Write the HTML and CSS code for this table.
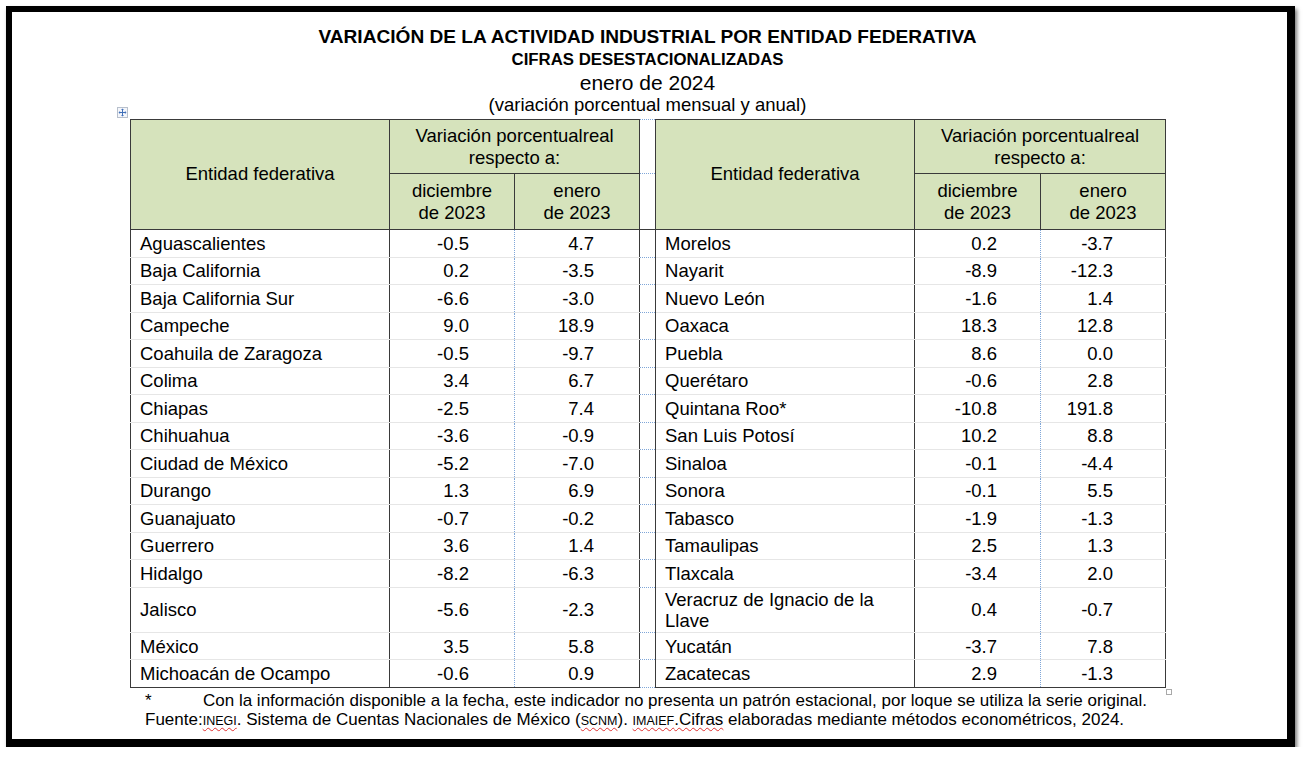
FILE: index.html
```html
<!DOCTYPE html>
<html lang="es">
<head>
<meta charset="utf-8">
<title>Variación de la actividad industrial por entidad federativa</title>
<link rel="stylesheet" href="styles.css">
</head>
<body>
<div class="frame">
  <div class="content">
    <div class="title">VARIACIÓN DE LA ACTIVIDAD INDUSTRIAL POR ENTIDAD FEDERATIVA</div>
    <div class="sub">CIFRAS DESESTACIONALIZADAS</div>
    <div class="date">enero de 2024</div>
    <div class="unit">(variación porcentual mensual y anual)</div>
    <div class="table-wrap">
      <svg class="move-handle" width="11" height="11" viewBox="0 0 11 11">
        <rect x="0.5" y="0.5" width="10" height="10" fill="#f4f6fb" stroke="#b8c0cc"/>
        <path d="M5.5 2v7M2 5.5h7" stroke="#3f6fb8" stroke-width="1"/>
        <path d="M5.5 1.5l-1.5 1.6h3zM5.5 9.5l-1.5-1.6h3zM1.5 5.5l1.6-1.5v3zM9.5 5.5l-1.6-1.5v3z" fill="#3f6fb8"/>
      </svg>
      <table class="data">
        <colgroup>
          <col class="c-name"><col class="c-num"><col class="c-num">
          <col class="c-gap">
          <col class="c-name"><col class="c-num2"><col class="c-num">
        </colgroup>
        <thead>
          <tr class="h1">
            <th rowspan="2" class="hname">Entidad federativa</th>
            <th colspan="2">Variación porcentualreal<br>respecto a:</th>
            <td class="gap"></td>
            <th rowspan="2" class="hname">Entidad federativa</th>
            <th colspan="2">Variación porcentualreal<br>respecto a:</th>
          </tr>
          <tr class="h2">
            <th>diciembre<br>de 2023</th>
            <th>enero<br>de 2023</th>
            <td class="gap"></td>
            <th>diciembre<br>de 2023</th>
            <th>enero<br>de 2023</th>
          </tr>
        </thead>
        <tbody>
          <tr><td class="name">Aguascalientes</td><td class="n1">-0.5</td><td class="n2">4.7</td><td class="gap"></td><td class="name">Morelos</td><td class="n3">0.2</td><td class="n4">-3.7</td></tr>
          <tr><td class="name">Baja California</td><td class="n1">0.2</td><td class="n2">-3.5</td><td class="gap"></td><td class="name">Nayarit</td><td class="n3">-8.9</td><td class="n4">-12.3</td></tr>
          <tr><td class="name">Baja California Sur</td><td class="n1">-6.6</td><td class="n2">-3.0</td><td class="gap"></td><td class="name">Nuevo León</td><td class="n3">-1.6</td><td class="n4">1.4</td></tr>
          <tr><td class="name">Campeche</td><td class="n1">9.0</td><td class="n2">18.9</td><td class="gap"></td><td class="name">Oaxaca</td><td class="n3">18.3</td><td class="n4">12.8</td></tr>
          <tr><td class="name">Coahuila de Zaragoza</td><td class="n1">-0.5</td><td class="n2">-9.7</td><td class="gap"></td><td class="name">Puebla</td><td class="n3">8.6</td><td class="n4">0.0</td></tr>
          <tr><td class="name">Colima</td><td class="n1">3.4</td><td class="n2">6.7</td><td class="gap"></td><td class="name">Querétaro</td><td class="n3">-0.6</td><td class="n4">2.8</td></tr>
          <tr><td class="name">Chiapas</td><td class="n1">-2.5</td><td class="n2">7.4</td><td class="gap"></td><td class="name">Quintana Roo*</td><td class="n3">-10.8</td><td class="n4">191.8</td></tr>
          <tr><td class="name">Chihuahua</td><td class="n1">-3.6</td><td class="n2">-0.9</td><td class="gap"></td><td class="name">San Luis Potosí</td><td class="n3">10.2</td><td class="n4">8.8</td></tr>
          <tr><td class="name">Ciudad de México</td><td class="n1">-5.2</td><td class="n2">-7.0</td><td class="gap"></td><td class="name">Sinaloa</td><td class="n3">-0.1</td><td class="n4">-4.4</td></tr>
          <tr><td class="name">Durango</td><td class="n1">1.3</td><td class="n2">6.9</td><td class="gap"></td><td class="name">Sonora</td><td class="n3">-0.1</td><td class="n4">5.5</td></tr>
          <tr><td class="name">Guanajuato</td><td class="n1">-0.7</td><td class="n2">-0.2</td><td class="gap"></td><td class="name">Tabasco</td><td class="n3">-1.9</td><td class="n4">-1.3</td></tr>
          <tr><td class="name">Guerrero</td><td class="n1">3.6</td><td class="n2">1.4</td><td class="gap"></td><td class="name">Tamaulipas</td><td class="n3">2.5</td><td class="n4">1.3</td></tr>
          <tr><td class="name">Hidalgo</td><td class="n1">-8.2</td><td class="n2">-6.3</td><td class="gap"></td><td class="name">Tlaxcala</td><td class="n3">-3.4</td><td class="n4">2.0</td></tr>
          <tr><td class="name">Jalisco</td><td class="n1">-5.6</td><td class="n2">-2.3</td><td class="gap"></td><td class="name">Veracruz de Ignacio de la Llave</td><td class="n3">0.4</td><td class="n4">-0.7</td></tr>
          <tr><td class="name">México</td><td class="n1">3.5</td><td class="n2">5.8</td><td class="gap"></td><td class="name">Yucatán</td><td class="n3">-3.7</td><td class="n4">7.8</td></tr>
          <tr><td class="name">Michoacán de Ocampo</td><td class="n1">-0.6</td><td class="n2">0.9</td><td class="gap"></td><td class="name">Zacatecas</td><td class="n3">2.9</td><td class="n4">-1.3</td></tr>
        </tbody>
      </table>
      <span class="resize-handle"></span>
    </div>
    <div class="notes">
      <div class="note"><span class="star">*</span>Con la información disponible a la fecha, este indicador no presenta un patrón estacional, por loque se utiliza la serie original.</div>
      <div class="note">Fuente:<span class="sp sm">INEGI</span>. Sistema de Cuentas Nacionales de México (<span class="sp sm">SCNM</span>). <span class="sp sm">IMAIEF</span><span class="sp">.Cifras</span> elaboradas mediante métodos econométricos, 2024.</div>
    </div>
  </div>
</div>
</body>
</html>
```

FILE: styles.css
```css
html, body {
  margin: 0;
  padding: 0;
  background: #ffffff;
}

body {
  font-family: "Liberation Sans", Arial, sans-serif;
  color: #000;
}

.frame {
  box-sizing: border-box;
  margin: 6px 0 0 6px;
  width: 1289px;
  height: 741px;
  border-style: solid;
  border-color: #000;
  border-width: 6px 8px 8px 6px;
  box-shadow: 2px 3px 4px rgba(0, 0, 0, 0.55);
  background: #fff;
}

.content {
  width: 1035px;
  margin-left: 118px;
  padding-top: 14px;
}

.title {
  text-align: center;
  font-weight: bold;
  font-size: 19.1px;
  line-height: 22px;
}

.sub {
  text-align: center;
  font-weight: bold;
  font-size: 16.8px;
  line-height: 23px;
}

.date {
  text-align: center;
  font-size: 21px;
  line-height: 24px;
}

.unit {
  text-align: center;
  font-size: 18.5px;
  line-height: 20px;
  margin-bottom: 4px;
}

.table-wrap {
  position: relative;
}

.move-handle {
  position: absolute;
  left: -13px;
  top: -12px;
}

.resize-handle {
  position: absolute;
  right: -7px;
  bottom: -7px;
  width: 4px;
  height: 4px;
  border: 1px solid #a9a9a9;
  background: #fff;
}

table.data {
  border-collapse: collapse;
  width: 1035px;
  table-layout: fixed;
  font-size: 18.5px;
}

col.c-name { width: 259px; }
col.c-num { width: 125px; }
col.c-num2 { width: 126px; }
col.c-gap { width: 16px; }

table.data th {
  background: #d6e3bc;
  font-weight: normal;
  text-align: center;
  vertical-align: middle;
  border: 1px solid #3a3a3a;
  padding: 0;
  line-height: 21.5px;
}

tr.h1 { height: 54px; }
tr.h2 { height: 56px; }

table.data th.hname {
  padding-bottom: 2px;
}

table.data tbody tr {
  height: 27.5px;
}

table.data tbody td {
  padding: 0;
  padding-top: 1px;
  line-height: 21.6px;
  vertical-align: middle;
  border-top: 1px solid #e6e6e6;
  border-bottom: 1px solid #e6e6e6;
}

table.data thead tr.h2 th,
table.data thead tr.h2 td.gap {
  border-bottom: 1px solid #3a3a3a;
}

td.name {
  text-align: left;
  padding-left: 9px !important;
  padding-right: 8px !important;
  border-left: 1px solid #3a3a3a;
  border-right: 1px solid #3a3a3a;
}

td.n1, td.n2, td.n3, td.n4 {
  text-align: right;
}

td.n1 {
  padding-right: 45px !important;
  border-right: 1px dotted #7fa6d8;
}

td.n2 {
  padding-right: 45px !important;
  border-right: 1px solid #3a3a3a;
}

td.n3 {
  padding-right: 43px !important;
  border-right: 1px dotted #7fa6d8;
}

td.n4 {
  padding-right: 52px !important;
  border-right: 1px solid #3a3a3a;
}

table.data tbody tr:last-child td {
  border-bottom: 1px solid #3a3a3a;
}

table.data td.gap,
table.data tbody td.gap {
  background: #fff;
  border-top: 1px dotted #7fa6d8;
  border-bottom: 1px dotted #7fa6d8;
  border-left: 1px solid #3a3a3a;
  border-right: 1px solid #3a3a3a;
}

table.data tbody tr:last-child td.gap {
  border-bottom: 1px dotted #7fa6d8;
}

.notes {
  padding-left: 15px;
  padding-top: 3px;
  font-size: 17px;
  line-height: 19px;
}

.star {
  display: inline-block;
  width: 58px;
}

.sp {
  text-decoration: underline wavy #e03030;
  text-decoration-thickness: 1px;
  text-underline-offset: 2px;
}

.sm {
  font-size: 12.5px;
}
```
